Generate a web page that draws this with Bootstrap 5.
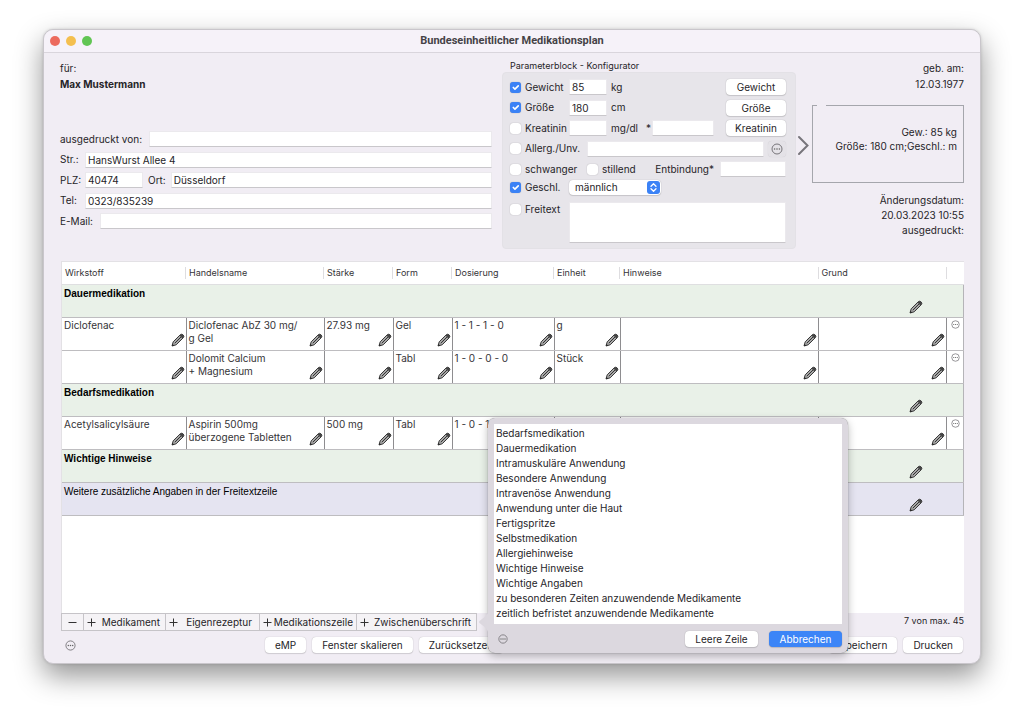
<!DOCTYPE html>
<html lang="de">
<head>
<meta charset="utf-8">
<meta name="viewport" content="width=device-width, initial-scale=1">
<title>Bundeseinheitlicher Medikationsplan</title>
<link href="https://cdn.jsdelivr.net/npm/bootstrap@5.3.0/dist/css/bootstrap.min.css" rel="stylesheet">
<style>
body{font:10px/15px Inter,"Liberation Sans",sans-serif;color:#262428;background:#fff;padding:29px 43px 57px 43px}
.app-window{background:#f1edf4;border:1px solid #c9c6cb;border-radius:10px;box-shadow:0 12px 28px rgba(0,0,0,.42),0 0 3px rgba(0,0,0,.15)}
.titlebar{height:23px;background:#f6f2f9;border-bottom:1px solid #d9d5dc;border-radius:10px 10px 0 0;padding:0 6px}
.titlebar h1{font:700 11px/22px Roboto,"Liberation Sans",sans-serif;color:#454247}
.light{width:10px;height:10px;border-radius:50%}
.light-close{background:#ec6a5e}.light-min{background:#f4bf4f}.light-max{background:#61c554}
.lights{gap:6px;width:60px}
.content-pad{padding:7px 16px 10px 16px}
.top-area{min-height:201px;gap:10px}
.person{line-height:16px}
.mac-field{appearance:none;border:1px solid #ebe9ed;border-bottom-color:#c9c7cb;background:#fff;height:16px;padding:0 2px;font-size:10px;line-height:14px;color:#262428;min-width:0;border-radius:0}
.mac-field:focus{outline:1px solid #3b82f6}
.address{height:98px;margin-top:39px}
.address label{white-space:nowrap}
.long-lab{margin-right:7px}
.ort-lab{margin:0 5px}
.a-lab{width:25px}
.zip{width:58px}
.config{width:294px}
.config-title{font-size:9px;line-height:12px;padding-left:8px}
.config-box{background:#e7e5ea;border:1px solid #e3e1e6;border-radius:4px;padding:6px 9px 4px 7px;height:177px}
.config-rows{height:98px}
.config-rows>div,.row-line{height:16px}
.row-line{margin-top:2px}
.free-row{margin-top:7px}
.form-check-input.mac-check{width:11px;height:11px;margin:0 4px 0 0;border:0;border-radius:3px;background-color:#fff;box-shadow:0 0 1px rgba(0,0,0,.35);flex:none}
.form-check-input.mac-check:checked{background-color:#3b82f6}
.lab{width:44px;white-space:nowrap}
.lab-wide.lab{width:62px}
.num{width:38px}
.unit{width:45px;padding:0 1px 0 4px}
.mid{width:62px}
.mac-btn{font:10px/14px Inter,"Liberation Sans",sans-serif;color:#262428;background:#fff;border:0;border-radius:4px;height:16px;padding:0 10px;box-shadow:0 0 1px rgba(0,0,0,.3),0 1px 1px rgba(0,0,0,.12);white-space:nowrap}
.config .mac-btn{width:60px;padding:0}
.config .more-btn{width:18px;height:16px;background:#e4e2e7;box-shadow:0 0 1px rgba(0,0,0,.15)}
.due{width:66px}
.due-lab{margin-right:6px}
.sex-box{width:92px}
.sex{appearance:none;width:100%;height:15px;border:0;border-radius:4px;background:#fff;padding:0 6px;font-size:10px;line-height:14px;color:#262428;box-shadow:0 0 1px rgba(0,0,0,.3),0 1px 1px rgba(0,0,0,.12)}
.sex-arrows{right:1px;top:1px}
.free{width:217px;height:41px;resize:none}
.right-col{width:168px;margin-left:-10px}
.result{border:1px solid #a5a6ac;height:78px;margin-top:13px;line-height:14px;padding:19px 6px 0 0}
.result::before{content:"";position:absolute;left:4px;top:-1px;width:9px;height:1px;background:#f1edf4}
.dates{margin-top:10px}
.arrow{width:16px;margin-top:75px;padding-left:1px}
.plan-wrap{background:#fff;border-left:1px solid #e3e1e5;border-top:1px solid #e3e1e5;margin-left:1px}
.plan{table-layout:fixed;width:100%;line-height:13px;color:#353437;border-collapse:collapse}
.plan th{font-size:9px;font-weight:400;height:22px;padding:0 3px;color:#353437;vertical-align:middle;border-bottom:1px solid #dfdfe1}
.plan th span{display:block;height:12px;line-height:12px;border-left:1px solid #dedde0;padding-left:3px;margin-left:-4px}
.plan th:first-child span{border:0;margin-left:-3px;padding-left:3px}
.plan td{height:33px;padding:1px 2px 0 2px;vertical-align:top;border-bottom:1px solid #bebdc0;border-right:1px solid #8e8d90}
.plan td:last-child{border-right:1px solid #b5b4b8}
.plan td>div{height:31px}
.plan td.act{padding:0;text-align:center}
.plan .pen{padding:0;border:0;background:none;line-height:0;align-self:flex-end;margin-left:auto;margin-bottom:3px;margin-right:-1px}
.plan .group td{background:#e9f1e8;font:bold 10px/15px "Liberation Sans",sans-serif;color:#000}
.plan .group .pen,.plan .note .pen{margin-right:38px}
.plan .note td{background:#e5e4f1;font:10px/15px "Liberation Sans",sans-serif;color:#000}
.addbar{height:18px;margin-left:1px}
.add{border:1px solid #c6c4c8;border-right-width:0;background:#f5f3f6;height:18px;font:10px/14px Inter,"Liberation Sans",sans-serif;color:#262428;padding:0 5px 0 3px;white-space:nowrap;display:flex;align-items:center;justify-content:space-between}
.add svg{flex:none}
.add-minus{width:22px;padding:0 6px}
.w-a{width:82px}.w-b{width:94px;padding-right:7px}.w-c{width:97px;padding-right:3px}.w-d{width:121px;border-right-width:1px}
.count{font-size:9px}
.foot{margin-top:6px;gap:6px;padding:0 1px 0 5px}
.foot-more{margin-right:183px}
.bare{border:0;background:none;padding:0;line-height:0}
.pop{left:calc(100% + 11px);bottom:-22px;width:360px;background:#dcd8df;border-radius:7px;padding:6px 6px 6px 6px;box-shadow:0 0 1px rgba(0,0,0,.5),0 3px 9px rgba(0,0,0,.28);z-index:5}
.pop-arrow{left:-10px;bottom:19px}
.pop ul{background:#fff;height:200px;padding:2px 0 0 2px;line-height:15px}
.pop a{color:#262428;text-decoration:none;display:block}
.pop-foot{margin-top:7px;gap:11px;padding-left:4px}
.pop .mac-btn{width:73px;padding:0}
.pop .blue{background:#3c85f7;color:#fff}
</style>
</head>
<body class="min-vh-100 d-flex">
<svg width="0" height="0" class="position-absolute" aria-hidden="true">
<symbol id="pen" viewBox="0 0 14 14"><path d="M1 13 2.200 8.800 9.200 1.800Q10.600.600 12.100 1.900T12.200 4.800L5.200 11.800Z" fill="#a8a8a8" stroke="#383838" stroke-width="1" stroke-linejoin="round"/><path d="M3.800 10.200 10 4" stroke="#333" stroke-width="1"/><path d="M9.200 1.800Q10.600.600 12.100 1.900T12.200 4.800L11.400 5.600 8.500 2.600Z" fill="#444"/><path d="M1 13 1.600 10.900 3.100 12.400Z" fill="#222"/></symbol>
<symbol id="dots" viewBox="0 0 12 12"><circle cx="6" cy="6" r="5" fill="none" stroke="#77757a"/><circle cx="3.600" cy="6" r=".8" fill="#666"/><circle cx="6" cy="6" r=".8" fill="#666"/><circle cx="8.400" cy="6" r=".8" fill="#666"/></symbol>
<symbol id="plus" viewBox="0 0 9 9"><path d="M4.500.500v8M.500 4.500h8" stroke="#333"/></symbol>
</svg>

<main class="app-window flex-grow-1 d-flex flex-column">
  <header class="titlebar d-flex align-items-center">
    <div class="lights d-flex"><span class="light light-close"></span><span class="light light-min"></span><span class="light light-max"></span></div>
    <h1 class="flex-grow-1 text-center m-0">Bundeseinheitlicher Medikationsplan</h1>
    <div class="lights"></div>
  </header>

  <div class="content-pad flex-grow-1 d-flex flex-column">
    <section class="top-area d-flex align-items-start">
      <div class="flex-grow-1">
        <div class="person">für:<br><strong>Max Mustermann</strong></div>
        <form class="address d-flex flex-column justify-content-between">
          <div class="d-flex align-items-center"><label for="von" class="long-lab">ausgedruckt von:</label><input id="von" class="mac-field flex-grow-1"></div>
          <div class="d-flex align-items-center"><label for="str" class="a-lab">Str.:</label><input id="str" class="mac-field flex-grow-1" value="HansWurst Allee 4"></div>
          <div class="d-flex align-items-center"><label for="plz" class="a-lab">PLZ:</label><input id="plz" class="mac-field zip" value="40474"><label for="ort" class="ort-lab">Ort:</label><input id="ort" class="mac-field flex-grow-1" value="Düsseldorf"></div>
          <div class="d-flex align-items-center"><label for="tel" class="a-lab">Tel:</label><input id="tel" class="mac-field flex-grow-1" value="0323/835239"></div>
          <div class="d-flex align-items-center"><label for="mail" class="long-lab">E-Mail:</label><input id="mail" type="email" class="mac-field flex-grow-1"></div>
        </form>
      </div>

      <div class="config">
        <div class="config-title">Parameterblock - Konfigurator</div>
        <div class="config-box">
          <div class="config-rows d-flex flex-column justify-content-between">
            <div class="d-flex align-items-center"><input type="checkbox" class="form-check-input mac-check" id="c1" checked><label for="c1" class="lab">Gewicht</label><input class="mac-field num" value="85" aria-label="Gewicht in kg"><span class="unit">kg</span><button type="button" class="mac-btn ms-auto">Gewicht</button></div>
            <div class="d-flex align-items-center"><input type="checkbox" class="form-check-input mac-check" id="c2" checked><label for="c2" class="lab">Größe</label><input class="mac-field num" value="180" aria-label="Größe in cm"><span class="unit">cm</span><button type="button" class="mac-btn ms-auto">Größe</button></div>
            <div class="d-flex align-items-center"><input type="checkbox" class="form-check-input mac-check" id="c3"><label for="c3" class="lab">Kreatinin</label><input class="mac-field num" aria-label="Kreatinin"><span class="unit d-flex justify-content-between"><span>mg/dl</span><span>*</span></span><input class="mac-field mid" aria-label="Kreatinin vom"><button type="button" class="mac-btn ms-auto">Kreatinin</button></div>
            <div class="d-flex align-items-center"><input type="checkbox" class="form-check-input mac-check" id="c4"><label for="c4" class="lab lab-wide">Allerg./Unv.</label><input class="mac-field flex-grow-1" aria-label="Allergien"><button type="button" class="mac-btn more-btn bare ms-1" aria-label="Mehr"><svg width="12" height="12"><use href="#dots"/></svg></button></div>
            <div class="d-flex align-items-center"><input type="checkbox" class="form-check-input mac-check" id="c5"><label for="c5" class="lab lab-wide">schwanger</label><input type="checkbox" class="form-check-input mac-check" id="c6"><label for="c6">stillend</label><label for="due" class="ms-auto due-lab">Entbindung*</label><input id="due" class="mac-field due"></div>
          </div>
          <div class="row-line d-flex align-items-center"><input type="checkbox" class="form-check-input mac-check" id="c7" checked><label for="c7" class="lab">Geschl.</label>
            <div class="sex-box position-relative d-flex"><select class="sex" aria-label="Geschlecht"><option>männlich</option><option>weiblich</option></select><svg class="sex-arrows position-absolute pe-none" width="13" height="13" viewBox="0 0 13 13"><rect width="13" height="13" rx="3" fill="#3b82f6"/><path d="M4 5.300 6.500 2.800 9 5.300M4 7.700 6.500 10.200 9 7.700" fill="none" stroke="#fff" stroke-width="1.300" stroke-linecap="round" stroke-linejoin="round"/></svg></div></div>
          <div class="d-flex align-items-start free-row"><div class="d-flex align-items-center"><input type="checkbox" class="form-check-input mac-check" id="c8"><label for="c8" class="lab">Freitext</label></div><textarea class="mac-field free" aria-label="Freitext"></textarea></div>
        </div>
      </div>

      <div class="right-col d-flex">
        <div class="arrow"><svg width="13" height="21" viewBox="0 0 13 21"><path d="M2 2 10.500 10.500 2 19" fill="none" stroke="#77757b" stroke-width="2" stroke-linecap="round"/></svg></div>
        <div class="flex-grow-1 text-end">
          <div class="person">geb. am:<br>12.03.1977</div>
          <div class="result position-relative">Gew.: 85 kg<br>Größe: 180 cm;Geschl.: m</div>
          <div class="dates">Änderungsdatum:<br>20.03.2023 10:55<br>ausgedruckt:</div>
        </div>
      </div>
    </section>

    <section class="plan-wrap flex-grow-1">
      <table class="plan">
        <colgroup><col width="124"><col width="138"><col width="69"><col width="59"><col width="102"><col width="66"><col><col width="128"><col width="17"></colgroup>
        <thead><tr><th scope="col"><span>Wirkstoff</span></th><th scope="col"><span>Handelsname</span></th><th scope="col"><span>Stärke</span></th><th scope="col"><span>Form</span></th><th scope="col"><span>Dosierung</span></th><th scope="col"><span>Einheit</span></th><th scope="col"><span>Hinweise</span></th><th scope="col"><span>Grund</span></th><th><span></span></th></tr></thead>
        <tbody id="rows"></tbody>
      </table>
    </section>

    <div class="addbar d-flex">
      <button type="button" class="add add-minus" aria-label="Entfernen"><svg width="9" height="9" viewBox="0 0 9 9"><path d="M.500 4.500h8" stroke="#333"/></svg></button>
      <button type="button" class="add w-a"><svg width="9" height="9"><use href="#plus"/></svg>Medikament</button>
      <button type="button" class="add w-b"><svg width="9" height="9"><use href="#plus"/></svg>Eigenrezeptur</button>
      <button type="button" class="add w-c"><svg width="9" height="9"><use href="#plus"/></svg>Medikationszeile</button>
      <div class="position-relative">
        <button type="button" class="add w-d" aria-expanded="true"><svg width="9" height="9"><use href="#plus"/></svg>Zwischenüberschrift</button>
        <div class="pop position-absolute" role="dialog" aria-label="Zwischenüberschrift">
          <svg class="pop-arrow position-absolute" width="11" height="24" viewBox="0 0 11 24"><path d="M11 0Q10 4 6 7.500L1.500 11Q.3 12 1.500 13L6 16.500Q10 20 11 24Z" fill="#dcd8df"/></svg>
          <ul class="list-unstyled m-0">
            <li><a href="#">Bedarfsmedikation</a></li><li><a href="#">Dauermedikation</a></li><li><a href="#">Intramuskuläre Anwendung</a></li><li><a href="#">Besondere Anwendung</a></li><li><a href="#">Intravenöse Anwendung</a></li><li><a href="#">Anwendung unter die Haut</a></li><li><a href="#">Fertigspritze</a></li><li><a href="#">Selbstmedikation</a></li><li><a href="#">Allergiehinweise</a></li><li><a href="#">Wichtige Hinweise</a></li><li><a href="#">Wichtige Angaben</a></li><li><a href="#">zu besonderen Zeiten anzuwendende Medikamente</a></li><li><a href="#">zeitlich befristet anzuwendende Medikamente</a></li>
          </ul>
          <div class="pop-foot d-flex align-items-center"><button type="button" class="bare me-auto" aria-label="Mehr"><svg width="10" height="10"><use href="#dots"/></svg></button><button type="button" class="mac-btn">Leere Zeile</button><button type="button" class="mac-btn blue">Abbrechen</button></div>
        </div>
      </div>
      <span class="count ms-auto">7 von max. 45</span>
    </div>

    <footer class="foot d-flex align-items-center">
      <button type="button" class="bare foot-more" aria-label="Mehr"><svg width="11" height="11"><use href="#dots"/></svg></button>
      <button type="button" class="mac-btn">eMP</button>
      <button type="button" class="mac-btn">Fenster skalieren</button>
      <button type="button" class="mac-btn">Zurücksetzen</button>
      <button type="button" class="mac-btn ms-auto">Speichern</button>
      <button type="button" class="mac-btn">Drucken</button>
    </footer>
  </div>
</main>

<script src="https://cdn.jsdelivr.net/npm/bootstrap@5.3.0/dist/js/bootstrap.bundle.min.js"></script>
<script>
const rows = [
  {group: "Dauermedikation"},
  {cells: ["Diclofenac", "Diclofenac AbZ 30 mg/<br>g Gel", "27.93 mg", "Gel", "1 - 1 - 1 - 0", "g", "", ""]},
  {cells: ["", "Dolomit Calcium<br>+ Magnesium", "", "Tabl", "1 - 0 - 0 - 0", "Stück", "", ""]},
  {group: "Bedarfsmedikation"},
  {cells: ["Acetylsalicylsäure", "Aspirin 500mg<br>überzogene Tabletten", "500 mg", "Tabl", "1 - 0 - 1", "", "", ""]},
  {group: "Wichtige Hinweise"},
  {note: "Weitere zusätzliche Angaben in der Freitextzeile"}
];
const pen = '<button type="button" class="pen" aria-label="Bearbeiten"><svg width="14" height="14"><use href="#pen"/></svg></button>';
const box = t => `<div class="d-flex text-nowrap"><span>${t}</span>${pen}</div>`;
document.getElementById("rows").innerHTML = rows.map(r => r.cells
  ? `<tr>${r.cells.map(c => `<td>${box(c)}</td>`).join("")}<td class="act"><button type="button" class="bare" aria-label="Mehr"><svg width="9" height="9"><use href="#dots"/></svg></button></td></tr>`
  : `<tr class="${r.group ? "group" : "note"}"><td colspan="9">${box(r.group || r.note)}</td></tr>`).join("");
</script>
</body>
</html>
